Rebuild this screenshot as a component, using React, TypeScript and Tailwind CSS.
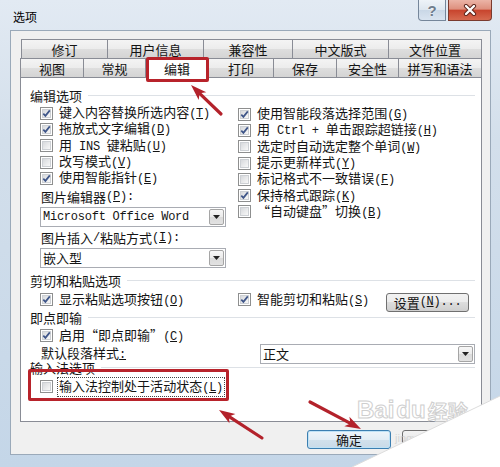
import React from "react";

const MONO = "font-['Liberation_Mono',monospace] text-[12px] tracking-[-0.25px]";

type Tok = { c: string; u: boolean };
function tokenize(s: string): Tok[] {
  const r: Tok[] = [];
  for (let i = 0; i < s.length; i++) {
    if (s[i] === "&" && i + 1 < s.length) {
      r.push({ c: s[i + 1], u: true });
      i++;
    } else r.push({ c: s[i], u: false });
  }
  return r;
}
const wide = (c: string) => c.charCodeAt(0) > 0x2000;

function Txt({ s }: { s: string }) {
  const groups: { w: boolean; t: Tok[] }[] = [];
  for (const t of tokenize(s)) {
    const w = wide(t.c);
    const g = groups[groups.length - 1];
    if (g && g.w === w) g.t.push(t);
    else groups.push({ w, t: [t] });
  }
  return (
    <>
      {groups.map((g, gi) => (
        <span key={gi} className={g.w ? "whitespace-pre" : `whitespace-pre ${MONO}`}>
          {g.t.map((t, ti) =>
            t.u ? (
              <span key={ti} className="underline underline-offset-[1px]">
                {t.c}
              </span>
            ) : (
              <React.Fragment key={ti}>{t.c}</React.Fragment>
            )
          )}
        </span>
      ))}
    </>
  );
}

function Box({ checked }: { checked?: boolean }) {
  return (
    <span className="relative flex h-[13px] w-[13px] shrink-0 border border-[#8e8f8f] bg-white p-[1px]">
      <span className="h-full w-full border border-[#cdd0d4] bg-[linear-gradient(135deg,#d7d9dc,#f8f8f8)]" />
      {checked && (
        <svg className="absolute left-0 top-0" width="11" height="11" viewBox="0 0 11 11">
          <path d="M2.3 5.7 L4.4 7.9 L8.8 2.4" fill="none" stroke="#3f5689" strokeWidth="1.7" />
        </svg>
      )}
    </span>
  );
}

function Check({ s, on, h = "h-[16.3px]" }: { s: string; on?: boolean; h?: string }) {
  return (
    <div className={`flex items-center ${h}`}>
      <Box checked={on} />
      <span className="ml-[6px] leading-[15px]">
        <Txt s={s} />
      </span>
    </div>
  );
}

function Heading({ s, h }: { s: string; h: string }) {
  return (
    <div className={`flex items-center ${h}`}>
      <span className="ml-[9px] whitespace-nowrap leading-none">{s}</span>
      <span className="ml-[6px] mr-[6px] h-px flex-1 bg-[#dde1e6]" />
    </div>
  );
}

function Select({ v, cls }: { v: string; cls: string }) {
  return (
    <div className={`flex h-[20px] items-stretch border border-[#a9acb3] bg-white ${cls}`}>
      <span className="flex flex-1 items-center pl-[2px] leading-none">
        <Txt s={v} />
      </span>
      <span className="m-[1px] flex w-[15px] items-center justify-center rounded-[2px] border border-[#a5a5a5] bg-[linear-gradient(#f7f7f7,#ebebeb_50%,#dadada_50%,#e2e2e2)]">
        <svg width="7" height="4" viewBox="0 0 7 4">
          <path d="M0 0H7L3.5 4Z" fill="#222" />
        </svg>
      </span>
    </div>
  );
}

function Arrow({ x1, y1, x2, y2 }: { x1: number; y1: number; x2: number; y2: number }) {
  const dx = x2 - x1,
    dy = y2 - y1,
    L = Math.hypot(dx, dy);
  const ux = dx / L,
    uy = dy / L;
  const hl = 16,
    hw = 5.5;
  const bx = x2 - ux * hl,
    by = y2 - uy * hl;
  const px = -uy,
    py = ux;
  return (
    <g>
      <line x1={x1} y1={y1} x2={bx + ux * 3} y2={by + uy * 3} stroke="#b3222b" strokeWidth="3.2" strokeLinecap="round" />
      <polygon
        points={`${x2},${y2} ${bx + px * hw},${by + py * hw} ${bx + ux * 4},${by + uy * 4} ${bx - px * hw},${by - py * hw}`}
        fill="#b3222b"
      />
    </g>
  );
}

const TAB =
  "flex items-center justify-center border-l border-t border-[#898c95] leading-none text-[13px]";
const TAB_BG = "bg-[linear-gradient(#f4f4f4,#ececec_50%,#dedede_50%,#d4d4d4)]";

export default function App() {
  const tabs1 = [
    { t: "修订", w: "w-[86px]" },
    { t: "用户信息", w: "w-[96px]" },
    { t: "兼容性", w: "w-[89px]" },
    { t: "中文版式", w: "w-[96px]" },
    { t: "文件位置", w: "w-[94px] border-r" },
  ];
  const tabs2 = [
    { t: "视图", w: "w-[63px]" },
    { t: "常规", w: "w-[62px]" },
    { t: "编辑", w: "w-[63px]", a: true },
    { t: "打印", w: "w-[65px]" },
    { t: "保存", w: "w-[63px]" },
    { t: "安全性", w: "w-[62px]" },
    { t: "拼写和语法", w: "w-[84px] border-r" },
  ];

  return (
    <div className="relative h-[467px] w-[500px] overflow-hidden bg-[linear-gradient(180deg,#e2eaf3,#d3dfeb_30%,#c4d6e8)] font-['Noto_Sans_CJK_SC',sans-serif] text-[13px] text-[#141414]">
      {/* title bar */}
      <div className="flex h-[30px] items-start">
        <div className="ml-[13px] mt-[9px] text-[12px] leading-[16px] text-black">选项</div>
        <div className="ml-auto mr-[8px] flex gap-[2px]">
          <div className="flex h-[21px] w-[28px] items-center justify-center rounded-bl-[4px] border border-t-0 border-[#75869a] bg-[linear-gradient(180deg,#eef3f8,#dde6ef_50%,#c9d7e6_50%,#d9e4f0)] font-['Liberation_Sans',sans-serif] text-[15px] font-bold leading-none text-[#6f7d8d] [text-shadow:0_0_2px_#fff]">
            ?
          </div>
          <div className="flex h-[21px] w-[44px] items-center justify-center rounded-br-[4px] border border-t-0 border-[#7a3a2e] bg-[linear-gradient(180deg,#ebb4a7,#de907e_45%,#c8452e_52%,#d66a50)]">
            <svg width="14" height="12" viewBox="0 0 14 12">
              <path d="M3 2 L11 10 M11 2 L3 10" stroke="#5a2219" strokeWidth="4.2" strokeLinecap="round" />
              <path d="M3 2 L11 10 M11 2 L3 10" stroke="#fff" strokeWidth="2.4" strokeLinecap="round" />
            </svg>
          </div>
        </div>
      </div>

      {/* client area */}
      <div className="ml-[10px] h-[425px] w-[481px] border border-[#9aa9b9] bg-[#f0f0f0] pl-[9px] pt-[8px]">
        <div className="w-[462px]">
          <div className="flex h-[19px] pl-[1px]">
            {tabs1.map((t) => (
              <div key={t.t} className={`${TAB} ${TAB_BG} ${t.w}`}>
                {t.t}
              </div>
            ))}
          </div>
          <div className="flex h-[20px]">
            {tabs2.map((t) => (
              <div key={t.t} className={`${TAB} ${t.w} ${t.a ? "bg-white" : `border-b ${TAB_BG}`}`}>
                {t.t}
              </div>
            ))}
          </div>

          {/* panel */}
          <div className="flex h-[344px] flex-col border-x border-b border-[#898c95] bg-white pt-[8px]">
            <Heading s="编辑选项" h="h-[18px]" />
            <div className="mt-[1px] flex">
              <div className="ml-[19px] flex w-[198px] flex-col">
                <Check s="键入内容替换所选内容(&T)" on />
                <Check s="拖放式文字编辑(&D)" on />
                <Check s="用 INS 键粘贴(&U)" />
                <Check s="改写模式(&V)" />
                <Check s="使用智能指针(&E)" on />
                <div className="ml-[1px] mt-[1.5px] flex h-[18px] items-center leading-none">
                  <Txt s="图片编辑器(&P):" />
                </div>
                <Select v="Microsoft Office Word" cls="mt-[1px] w-[186px]" />
                <div className="ml-[1px] mt-[2px] flex h-[18px] items-center leading-none">
                  <Txt s="图片插入/粘贴方式(&I):" />
                </div>
                <Select v="嵌入型" cls="mt-[1px] w-[186px]" />
              </div>
              <div className="mt-[1px] flex flex-col">
                <Check s="使用智能段落选择范围(&G)" on />
                <Check s="用 Ctrl + 单击跟踪超链接(&H)" on />
                <Check s="选定时自动选定整个单词(&W)" />
                <Check s="提示更新样式(&Y)" />
                <Check s="标记格式不一致错误(&F)" />
                <Check s="保持格式跟踪(&K)" on />
                <Check s="“自动键盘”切换(&B)" />
              </div>
            </div>

            <Heading s="剪切和粘贴选项" h="mt-[4px] h-[18px]" />
            <div className="flex h-[22px] items-start">
              <div className="ml-[19px] w-[198px]">
                <Check s="显示粘贴选项按钮(&O)" on h="h-[20px]" />
              </div>
              <div className="flex w-[231px] items-start">
                <Check s="智能剪切和粘贴(&S)" on h="h-[20px]" />
                <button className="ml-auto mt-[3px] flex h-[19px] w-[83px] items-center justify-center rounded-[3px] border border-[#707070] bg-[linear-gradient(#f2f2f2,#ebebeb_50%,#dddddd_50%,#cfcfcf)] leading-none text-[#141414]">
                  <Txt s="设置(&N)..." />
                </button>
              </div>
            </div>

            <Heading s="即点即输" h="h-[12px]" />
            <div className="ml-[19px] mt-[3px]">
              <Check s="启用“即点即输”(&C)" on h="h-[18px]" />
            </div>
            <div className="-mt-[1px] flex h-[20px] items-center">
              <div className="ml-[20px] w-[219px] leading-none">
                <Txt s="默认段落样式&:" />
              </div>
              <Select v="正文" cls="w-[215px]" />
            </div>

            <Heading s="输入法选项" h="-mt-[2px] h-[12px]" />
            <div className="ml-[19px] mt-[4px] flex h-[18px] items-center">
              <Box />
              <span className="ml-[4px] border border-dotted border-[#444] px-[1px] leading-[15px]">
                <Txt s="输入法控制处于活动状态(&L)" />
              </span>
            </div>
          </div>
        </div>

        {/* buttons */}
        <div className="mt-[8px] flex">
          <button className="ml-[287px] flex h-[19px] w-[84px] items-center justify-center rounded-[3px] border border-[#3c7fb1] bg-[linear-gradient(#eef5fa,#e2edf5_50%,#d2e1ec_50%,#c9dae8)] leading-none text-[#141414] shadow-[inset_0_0_0_1px_#bfe2f6]">
            确定
          </button>
          <button className="ml-[11px] flex h-[19px] w-[84px] items-center justify-center rounded-[3px] border border-[#707070] bg-[linear-gradient(#f2f2f2,#ebebeb_50%,#dddddd_50%,#cfcfcf)] leading-none text-[#141414]">
            取消
          </button>
        </div>
      </div>

      {/* watermark */}
      <div className="pointer-events-none absolute left-[357px] top-[398px] flex items-end gap-[2px] font-['Liberation_Sans',sans-serif] text-[24px] font-bold leading-none text-transparent [-webkit-text-stroke:1px_#cfcfcf]">
        <span>Bai</span>
        <span>du</span>
        <span className="font-['Noto_Sans_CJK_SC',sans-serif] text-[20px]">经验</span>
      </div>
      <div className="pointer-events-none absolute left-[395px] top-[430px] font-['Liberation_Sans',sans-serif] text-[11px] text-[#c8c8c8]/70">
        jingyan.baidu.com
      </div>

      {/* red annotation boxes */}
      <div className="pointer-events-none absolute left-[146px] top-[57px] h-[25px] w-[63px] rounded-[2px] border-[3px] border-[#b8232b]" />
      <div className="pointer-events-none absolute left-[28px] top-[369px] h-[32px] w-[201px] rounded-[2px] border-[3px] border-[#b8232b]" />

      {/* arrows + page curl */}
      <svg className="pointer-events-none absolute left-0 top-0" width="500" height="467" viewBox="0 0 500 467">
        <Arrow x1={221} y1={114} x2={191} y2={85} />
        <Arrow x1={262} y1={438} x2={219} y2={410} />
        <Arrow x1={310} y1={402} x2={361} y2={429} />
        <polygon points="352,467 500,396 500,467" fill="#ffffff" />
        <line x1="352" y1="467" x2="500" y2="396" stroke="#dcdcdc" strokeWidth="1" />
      </svg>
    </div>
  );
}
